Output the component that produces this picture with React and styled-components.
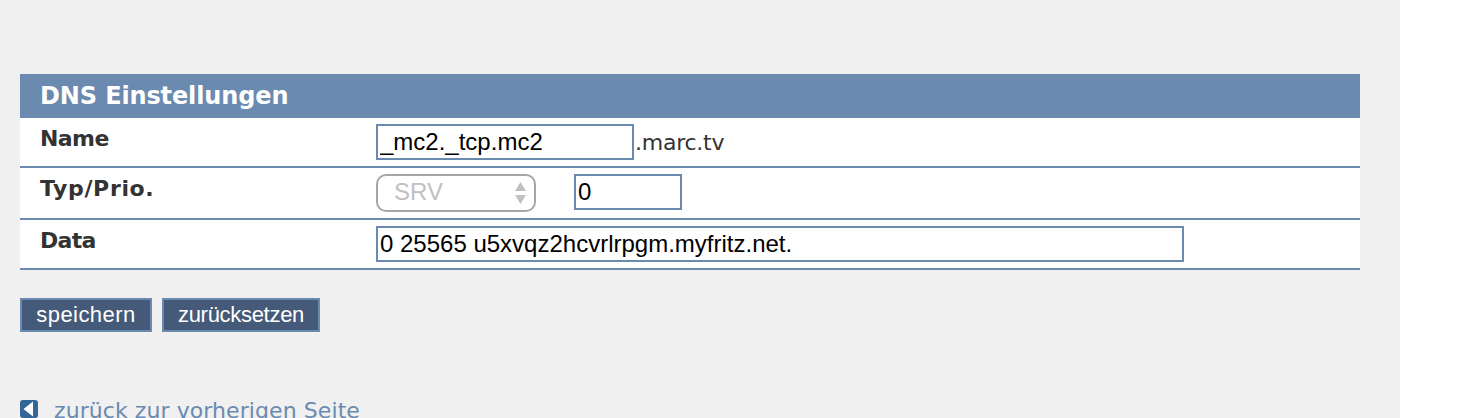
import React from "react";
import styled, { createGlobalStyle } from "styled-components";

const GlobalStyle = createGlobalStyle`
  * {
    box-sizing: border-box;
  }

  body {
    margin: 0;
    background-color: #fff;
    overflow: hidden;
  }
`;

const Page = styled.div`
  width: 1400px;
  height: 418px;
  padding: 74px 40px 0 20px;
  overflow: hidden;
  background-color: #f0f0f0;
  color: #333;
  font-family: Verdana, "DejaVu Sans", sans-serif;
  font-size: 22px;
`;

const Panel = styled.section`
  background-color: #fff;
`;

const PanelTitle = styled.h2`
  height: 44px;
  margin: 0;
  padding-left: 20px;
  background-color: #6a8ab0;
  color: #fff;
  font-size: 24px;
  font-weight: bold;
  line-height: 44px;
  letter-spacing: -0.13px;
`;

const Row = styled.div`
  display: grid;
  grid-template-columns: 336px 1fr;
  height: ${(props) => props.$height || 50}px;
  padding: 6px 0 0 20px;
  border-bottom: 2px solid #6a8ab0;
`;

const Label = styled.label`
  font-weight: bold;
  line-height: 29px;
  letter-spacing: ${(props) => props.$spacing || 0}px;
`;

const Fields = styled.div`
  display: flex;
  align-items: flex-start;
`;

const Input = styled.input`
  width: ${(props) => props.$width}px;
  height: 36px;
  margin: 0;
  padding: 0 2px;
  border: 2px solid #6a8ab0;
  border-radius: 0;
  outline: none;
  background-color: #fff;
  color: #000;
  font-family: "Liberation Sans", Arial, sans-serif;
  font-size: 24px;
`;

const Suffix = styled.span`
  margin-left: 1px;
  line-height: 37px;
  letter-spacing: -0.25px;
`;

const Select = styled.div`
  display: flex;
  align-items: center;
  justify-content: space-between;
  width: 160px;
  height: 38px;
  margin-right: 38px;
  padding: 0 8px 2px 16px;
  border: 2px solid #a6a6a6;
  border-radius: 10px;
  color: #c0c0c0;
  font-family: "Liberation Sans", Arial, sans-serif;
  font-size: 24px;

  svg {
    margin-top: 2px;
  }
`;

const Actions = styled.div`
  display: flex;
  gap: 10px;
  margin-top: 28px;
`;

const Button = styled.button`
  width: ${(props) => props.$width}px;
  height: 34px;
  padding: 0;
  border: 2px solid #6a8ab0;
  background-color: #455a78;
  color: #fff;
  font-family: "Liberation Sans", Arial, sans-serif;
  font-size: 22px;
  line-height: 30px;
  letter-spacing: ${(props) => props.$spacing}px;
`;

const BackLink = styled.a`
  display: flex;
  align-items: flex-start;
  gap: 16px;
  height: 30px;
  margin-top: 64px;
  color: #6a8ab0;
  line-height: 29px;
  letter-spacing: 0.08px;
  white-space: nowrap;
  text-decoration: none;

  svg {
    flex: none;
    margin-top: 4px;
  }
`;

const SelectArrows = () => (
  <svg width="11" height="22" viewBox="0 0 11 22">
    <path d="M5.5 0L11 9H0zM0 13h11l-5.5 9z" fill="#c0c0c0" />
  </svg>
);

const BackIcon = () => (
  <svg width="18" height="18" viewBox="0 0 18 18">
    <rect width="18" height="18" rx="3" fill="#336699" />
    <path d="M13 1.5v15L3.5 9z" fill="#fff" />
  </svg>
);

const App = () => {
  return (
    <>
      <GlobalStyle />
      <Page>
        <Panel>
          <PanelTitle>DNS Einstellungen</PanelTitle>
          <Row>
            <Label htmlFor="name" $spacing={-0.6}>
              Name
            </Label>
            <Fields>
              <Input id="name" $width={258} defaultValue="_mc2._tcp.mc2" />
              <Suffix>.marc.tv</Suffix>
            </Fields>
          </Row>
          <Row $height={52}>
            <Label htmlFor="prio" $spacing={0.65}>
              Typ/Prio.
            </Label>
            <Fields>
              <Select>
                SRV
                <SelectArrows />
              </Select>
              <Input id="prio" $width={108} defaultValue="0" />
            </Fields>
          </Row>
          <Row>
            <Label htmlFor="data" $spacing={-0.7}>
              Data
            </Label>
            <Fields>
              <Input
                id="data"
                $width={808}
                defaultValue="0 25565 u5xvqz2hcvrlrpgm.myfritz.net."
              />
            </Fields>
          </Row>
        </Panel>
        <Actions>
          <Button $width={132} $spacing={0.45}>
            speichern
          </Button>
          <Button $width={158} $spacing={-0.3}>
            zurücksetzen
          </Button>
        </Actions>
        <BackLink>
          <BackIcon />
          zurück zur vorherigen Seite
        </BackLink>
      </Page>
    </>
  );
};

export default App;
